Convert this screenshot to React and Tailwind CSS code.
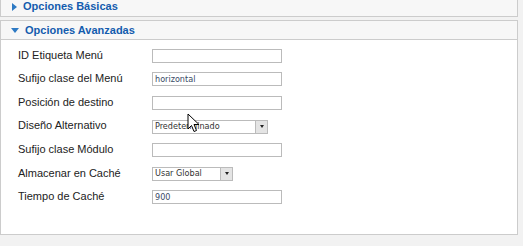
const rows = [
  { label: "ID Etiqueta Menú", type: "text", value: "" },
  { label: "Sufijo clase del Menú", type: "text", value: "horizontal" },
  { label: "Posición de destino", type: "text", value: "" },
  { label: "Diseño Alternativo", type: "select", value: "Predeterminado", width: "w-[116px]" },
  { label: "Sufijo clase Módulo", type: "text", value: "" },
  { label: "Almacenar en Caché", type: "select", value: "Usar Global", width: "w-[81px]" },
  { label: "Tiempo de Caché", type: "text", value: "900" },
];

function PanelHeader({ title, open }) {
  return (
    <div className="flex h-[19px] items-center gap-[6px] border-b border-[#cccccc] bg-[#f7f7f7] pl-[10px]">
      {open ? (
        <span className="h-0 w-0 border-x-[4px] border-t-[5px] border-x-transparent border-t-[#2e7ac4]" />
      ) : (
        <span className="ml-[1px] h-0 w-0 border-y-[4px] border-l-[5px] border-y-transparent border-l-[#2e7ac4]" />
      )}
      <span className="text-[11px] font-bold text-[#135cae]">{title}</span>
    </div>
  );
}

function Field({ row }) {
  if (row.type === "select") {
    return (
      <div className={`flex h-[14px] ${row.width} items-center border border-[#bbbbbb] bg-white`}>
        <span className="flex-1 truncate pl-[2px] font-['DejaVu_Sans_Condensed','DejaVu_Sans',sans-serif] text-[9px] leading-none text-[#333333]">
          {row.value}
        </span>
        <span className="flex h-[12px] w-[12px] items-center justify-center border-l border-[#bbbbbb] bg-[#e4e4e4]">
          <span className="h-0 w-0 border-x-[2.5px] border-t-[3px] border-x-transparent border-t-[#222222]" />
        </span>
      </div>
    );
  }
  return (
    <div className="flex h-[14px] w-[130px] items-center border border-[#bbbbbb] bg-white pl-[2px] font-['DejaVu_Sans_Condensed','DejaVu_Sans',sans-serif] text-[9px] leading-none text-[#3a4a66]">
      {row.value}
    </div>
  );
}

export default function App() {
  return (
    <div className="relative h-[246px] w-[523px] overflow-hidden bg-[#f2f2f2] font-['Liberation_Sans',Arial,sans-serif]">
      <div className="w-[518px]">
        <div className="-mt-[3px] border-x border-b border-[#cccccc] bg-white">
          <div className="flex h-[19px] items-center gap-[6px] bg-[#f7f7f7] pl-[10px]">
            <span className="ml-[1px] h-0 w-0 border-y-[4px] border-l-[5px] border-y-transparent border-l-[#2e7ac4]" />
            <span className="text-[11px] font-bold text-[#135cae]">Opciones Básicas</span>
          </div>
        </div>

        <div className="mt-[3px] border border-[#cccccc] bg-white">
          <PanelHeader title="Opciones Avanzadas" open />
          <div className="flex flex-col pb-[25px] pl-[17px] pt-[4px]">
            {rows.map((row) => (
              <div key={row.label} className="flex h-[23.6px] items-center">
                <span className="w-[134px] -translate-y-[1px] text-[11px] text-[#222222]">{row.label}</span>
                <Field row={row} />
              </div>
            ))}
          </div>
        </div>
      </div>

      <svg className="absolute left-[187px] top-[113px]" width="13" height="20" viewBox="0 0 13 20">
        <path d="M1 1 L1 16 L4.5 12.5 L7 18.5 L9.5 17.5 L7 11.5 L12 11.5 Z" fill="#ffffff" stroke="#000000" strokeWidth="1" strokeLinejoin="miter" />
      </svg>
    </div>
  );
}
